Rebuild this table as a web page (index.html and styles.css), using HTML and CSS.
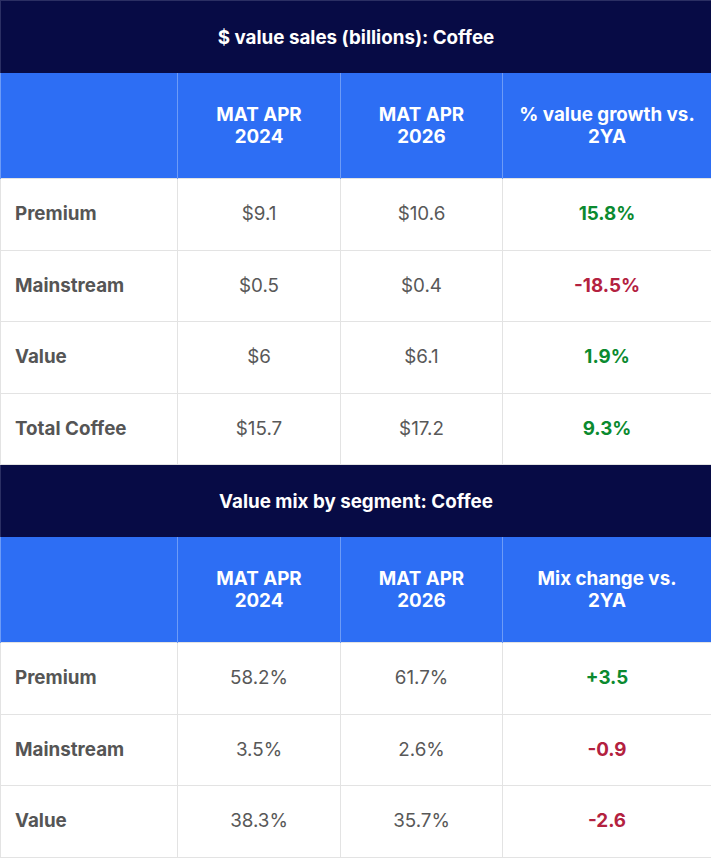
FILE: index.html
```html
<!DOCTYPE html>
<html>
<head>
<meta charset="utf-8">
<link rel="stylesheet" href="styles.css">
</head>
<body>
<table class="data">
  <colgroup>
    <col class="c1"><col class="c2"><col class="c3"><col class="c4">
  </colgroup>
  <tbody>
    <tr class="title"><th colspan="4">$ value sales (billions): Coffee</th></tr>
    <tr class="head"><th></th><th>MAT APR<br>2024</th><th>MAT APR<br>2026</th><th>% value growth vs.<br>2YA</th></tr>
    <tr><td class="label">Premium</td><td>$9.1</td><td>$10.6</td><td class="pos">15.8%</td></tr>
    <tr><td class="label">Mainstream</td><td>$0.5</td><td>$0.4</td><td class="neg">-18.5%</td></tr>
    <tr><td class="label">Value</td><td>$6</td><td>$6.1</td><td class="pos">1.9%</td></tr>
    <tr><td class="label">Total Coffee</td><td>$15.7</td><td>$17.2</td><td class="pos">9.3%</td></tr>
    <tr class="title"><th colspan="4">Value mix by segment: Coffee</th></tr>
    <tr class="head"><th></th><th>MAT APR<br>2024</th><th>MAT APR<br>2026</th><th>Mix change vs.<br>2YA</th></tr>
    <tr><td class="label">Premium</td><td>58.2%</td><td>61.7%</td><td class="pos">+3.5</td></tr>
    <tr><td class="label">Mainstream</td><td>3.5%</td><td>2.6%</td><td class="neg">-0.9</td></tr>
    <tr><td class="label">Value</td><td>38.3%</td><td>35.7%</td><td class="neg">-2.6</td></tr>
  </tbody>
</table>
</body>
</html>
```

FILE: styles.css
```css
html, body {
  margin: 0;
  padding: 0;
  background: #ffffff;
}

body {
  font-family: Inter, "Noto Sans", "Liberation Sans", sans-serif;
  font-size: 18.8px;
  color: #555555;
}

.data {
  width: 711px;
  border-collapse: collapse;
  table-layout: fixed;
  border: 1px solid #dcdcdc;
}

.c1 { width: 177px; }
.c2 { width: 163px; }
.c3 { width: 162px; }
.c4 { width: 209px; }

.data td {
  height: 70.5px;
  padding: 0 14px;
  text-align: center;
  border: 1px solid #e3e3e3;
  font-weight: 400;
  color: #585858;
  line-height: 22px;
}

.data td.label {
  text-align: left;
  font-weight: 700;
  color: #555555;
}

.data td.pos {
  color: #0b8a2f;
  font-weight: 700;
}

.data td.neg {
  color: #b3213f;
  font-weight: 700;
}

.title th {
  height: 72px;
  padding: 0;
  background: #070b45;
  color: #ffffff;
  font-weight: 700;
  text-align: center;
  border: 1px solid #2b2f63;
  border-bottom: none;
}

.head th {
  height: 105px;
  padding: 0 10px;
  background: #2d6ef4;
  color: #ffffff;
  font-weight: 700;
  line-height: 22px;
  text-align: center;
  border-left: 1px solid #6d9bf7;
  border-right: 1px solid #6d9bf7;
  border-top: none;
}
```
